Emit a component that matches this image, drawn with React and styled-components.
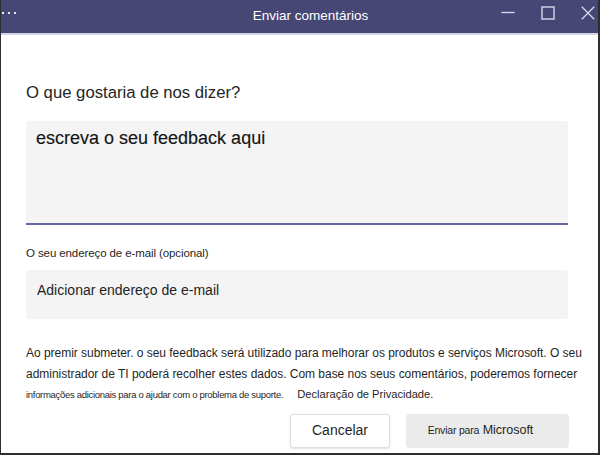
import React from 'react';
import styled, { createGlobalStyle } from 'styled-components';

const GlobalStyle = createGlobalStyle`
    html, body {
        margin: 0;
        padding: 0;
        background: #ffffff;
    }
    * {
        box-sizing: border-box;
    }
`

export default function App() {
    return (
        <>
            <GlobalStyle />
            <Window>
                <TitleBar>
                    <Dots>
                        <span /><span /><span />
                    </Dots>
                    <Title>Enviar comentários</Title>
                    <Controls>
                        <ControlButton aria-label="Minimizar">
                            <svg width="14" height="14" viewBox="0 0 14 14">
                                <path d="M0.5 6.5 H13.5" stroke="#d8d8ec" strokeWidth="1.4" />
                            </svg>
                        </ControlButton>
                        <ControlButton aria-label="Maximizar">
                            <svg width="14" height="14" viewBox="0 0 14 14">
                                <rect x="1" y="1" width="12" height="12" fill="none" stroke="#d8d8ec" strokeWidth="1.4" />
                            </svg>
                        </ControlButton>
                        <ControlButton aria-label="Fechar">
                            <svg width="14" height="14" viewBox="0 0 14 14">
                                <path d="M0.8 0.8 L13.2 13.2 M13.2 0.8 L0.8 13.2" stroke="#d8d8ec" strokeWidth="1.3" />
                            </svg>
                        </ControlButton>
                    </Controls>
                </TitleBar>

                <Content>
                    <Heading>O que gostaria de nos dizer?</Heading>
                    <FeedbackArea placeholder="escreva o seu feedback aqui" />

                    <Label>O seu endereço de e-mail (opcional)</Label>
                    <EmailInput placeholder="Adicionar endereço de e-mail" />

                    <Notice>
                        <Line>Ao premir submeter. o seu feedback será utilizado para melhorar os produtos e serviços Microsoft. O seu</Line>
                        <Line>administrador de TI poderá recolher estes dados. Com base nos seus comentários, poderemos fornecer</Line>
                        <Line>
                            <Small>informações adicionais para o ajudar com o problema de suporte.</Small>
                            <Privacy>Declaração de Privacidade.</Privacy>
                        </Line>
                    </Notice>

                    <Actions>
                        <Button>Cancelar</Button>
                        <Button primary>
                            <ButtonSmall>Enviar para</ButtonSmall> Microsoft
                        </Button>
                    </Actions>
                </Content>
            </Window>
        </>
    )
}

const Window = styled.div`
    width: 600px;
    height: 455px;
    display: flex;
    flex-direction: column;
    border-left: 1px solid #2e2e2e;
    border-right: 2px solid #2e2e2e;
    border-bottom: 2px solid #2e2e2e;
    background: #ffffff;
    font-family: "Liberation Sans", Arial, sans-serif;
    color: #1f1f1f;
`

const TitleBar = styled.div`
    height: 35px;
    flex-shrink: 0;
    display: grid;
    grid-template-columns: 1fr auto 1fr;
    align-items: center;
    background: #464775;
    border-bottom: 2px solid #d3d4ea;
    padding-bottom: 1px;
`

const Dots = styled.div`
    display: flex;
    gap: 4px;
    padding-left: 1px;
    align-self: start;
    margin-top: 12px;

    span {
        width: 2px;
        height: 2px;
        background: #e8e8f4;
    }
`

const Title = styled.div`
    color: #ffffff;
    font-size: 13.5px;
    padding-left: 22px;
    padding-bottom: 1px;
`

const Controls = styled.div`
    display: flex;
    justify-content: flex-end;
    gap: 26px;
    padding-right: 3px;
    align-self: start;
    margin-top: 6px;
`

const ControlButton = styled.div`
    width: 14px;
    height: 14px;
    display: flex;

    svg {
        display: block;
    }
`

const Content = styled.div`
    flex: 1;
    display: flex;
    flex-direction: column;
    padding: 0 17px 0 25px;
`

const Heading = styled.h2`
    margin: 48px 0 0;
    font-size: 16.7px;
    line-height: 20px;
    font-weight: normal;
    color: #252525;
`

const fieldBase = `
    width: 542px;
    border: none;
    border-radius: 3px;
    background: #f4f4f4;
    font-family: "Liberation Sans", Arial, sans-serif;
    outline: none;
`

const FeedbackArea = styled.textarea`
    ${fieldBase}
    height: 104px;
    margin-top: 18px;
    padding: 6px 10px;
    resize: none;
    border-bottom: 2px solid #6264a7;
    border-radius: 3px 3px 0 0;
    font-size: 18px;
    line-height: 22px;

    &::placeholder {
        color: #141414;
        -webkit-text-stroke: 0.15px #141414;
    }
`

const Label = styled.label`
    margin-top: 21px;
    font-size: 11.5px;
    line-height: 14px;
    letter-spacing: -0.1px;
    color: #1f1f1f;
`

const EmailInput = styled.input`
    ${fieldBase}
    height: 49px;
    margin-top: 10px;
    padding: 0 11px 10px;
    font-size: 14px;

    &::placeholder {
        color: #1f1f1f;
    }
`

const Notice = styled.div`
    margin-top: 24px;
    font-size: 12px;
    line-height: 20.5px;
    letter-spacing: -0.03px;
    color: #1f1f1f;
`

const Line = styled.div`
    white-space: nowrap;
`

const Small = styled.span`
    font-size: 9.5px;
    letter-spacing: -0.3px;
`

const Privacy = styled.span`
    margin-left: 14px;
    font-size: 11.2px;
`

const Actions = styled.div`
    display: flex;
    justify-content: flex-end;
    gap: 16px;
    margin-top: 8px;
    padding-right: 12px;
`

const ButtonSmall = styled.span`
    font-size: 10.5px;
    letter-spacing: -0.2px;
`

const Button = styled.button`
    height: 34px;
    width: ${props => props.primary ? '163px' : '100px'};
    border-radius: 3px;
    border: ${props => props.primary ? '1px solid #ebebeb' : '1px solid #dedede'};
    background: ${props => props.primary ? '#ebebeb' : '#ffffff'};
    box-shadow: ${props => props.primary ? 'none' : '0 1px 2px rgba(0,0,0,0.12)'};
    font-family: "Liberation Sans", Arial, sans-serif;
    font-size: ${props => props.primary ? '12.5px' : '14px'};
    color: #1f1f1f;
    padding: 0 ${props => props.primary ? '14px' : '0'} 2px 0;
`
